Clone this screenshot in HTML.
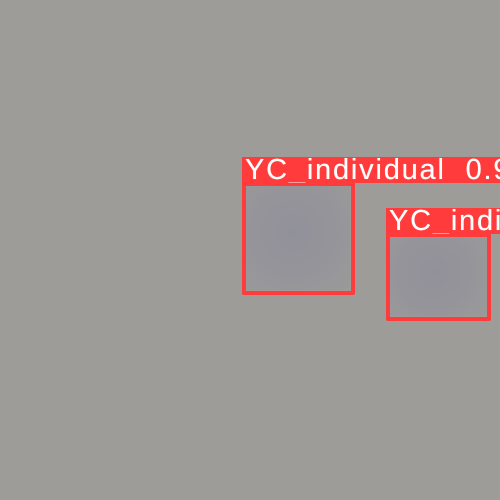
<!DOCTYPE html>
<html><head><style>
html,body{margin:0;padding:0}
body{width:500px;height:500px;overflow:hidden;position:relative;background:#9d9c98;font-family:"Liberation Sans",sans-serif}
.d{position:absolute;background:radial-gradient(circle at 45% 45%,#92919a 0%,#95949a 50%,#9b9a99 100%)}
.b{position:absolute;border:4px solid #ff3b3b;box-sizing:border-box;border-radius:2px}
.l{position:absolute;background:#ff3b3b;color:#fff;font-size:29px;line-height:27px;white-space:nowrap;overflow:hidden;letter-spacing:1.8px;word-spacing:10px;padding-left:3px;box-sizing:border-box;text-shadow:0 0 0.5px #fff}
</style></head><body>
<div class="d" style="left:246px;top:186px;width:104px;height:104px"></div>
<div class="d" style="left:390px;top:237px;width:97px;height:79px"></div>
<div class="b" style="left:242px;top:182px;width:113px;height:113px"></div>
<div class="l" style="left:242px;top:157px;width:258px;height:26px">YC_individual 0.9</div>
<div class="b" style="left:386px;top:233px;width:105px;height:88px"></div>
<div class="l" style="left:386px;top:208px;width:114px;height:26px">YC_individual</div>
</body></html>
